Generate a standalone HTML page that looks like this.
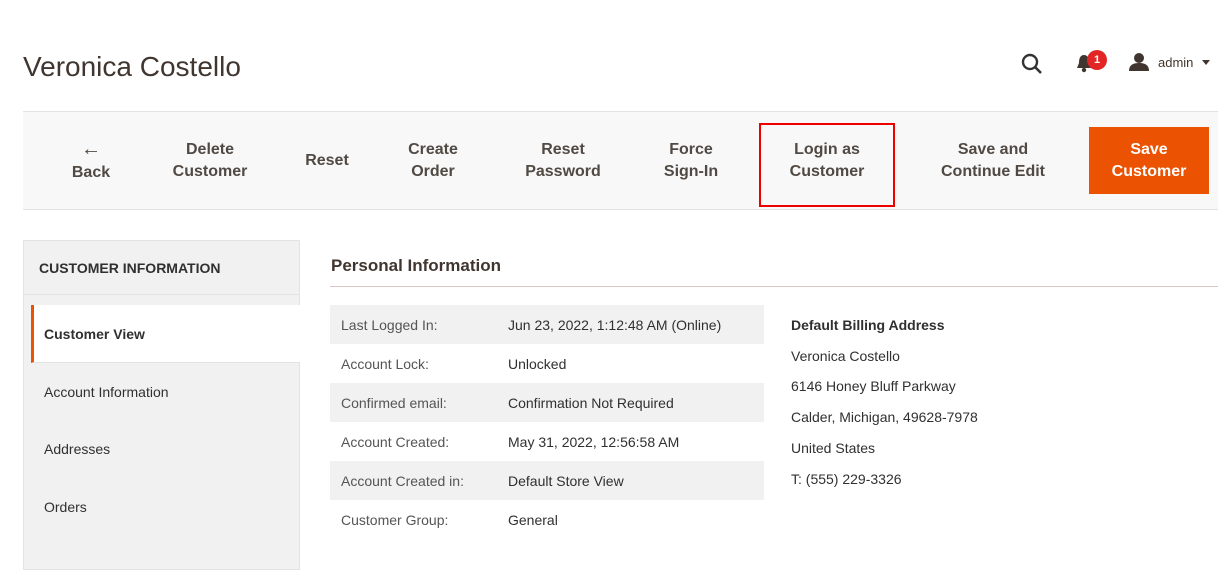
<!DOCTYPE html>
<html><head><style>
*{margin:0;padding:0;box-sizing:border-box}
body{width:1218px;height:560px;overflow:hidden;background:#fff;font-family:"Liberation Sans",sans-serif;color:#333;position:relative}
.a{position:absolute}
h1{position:absolute;left:23px;top:51px;font-size:28px;font-weight:normal;color:#41362f}
.tb{left:23px;top:111px;width:1195px;height:99px;background:#f8f8f8;border-top:1px solid #e3e3e3;border-bottom:1px solid #e3e3e3}
.btn{position:absolute;top:0;height:97px;display:flex;align-items:center;justify-content:center;text-align:center;font-size:16px;font-weight:bold;color:#514943;line-height:22px}
.side{left:23px;top:240px;width:277px;height:330px;background:#f1f1f1;border:1px solid #e3e3e3}
.it{position:absolute;left:44px;font-size:14px;color:#303030}
.row{position:absolute;left:330px;width:434px;height:39px;font-size:14px;color:#303030}
.row span{position:absolute;top:12px}
.row .l{left:11px;color:#555}
.row .v{left:178px}
.g{background:#f1f1f1}
.ad{position:absolute;left:791px;font-size:14px;color:#303030}
</style></head><body>
<h1>Veronica Costello</h1>
<svg class="a" style="left:1020px;top:52px" width="24" height="24" viewBox="0 0 24 24"><circle cx="10" cy="10" r="7" fill="none" stroke="#333" stroke-width="2.4"/><line x1="15" y1="15" x2="21" y2="21" stroke="#333" stroke-width="2.6"/></svg>
<svg class="a" style="left:1075px;top:54px" width="18" height="20" viewBox="0 0 18 20"><path d="M9 1C5 1 4 5 4 9L2 14H16L14 9C14 5 13 1 9 1Z" fill="#41362f"/><circle cx="9" cy="16" r="2.2" fill="#41362f"/></svg>
<div class="a" style="left:1087px;top:50px;width:20px;height:20px;border-radius:50%;background:#e22626;color:#fff;font-size:11px;font-weight:bold;text-align:center;line-height:20px">1</div>
<svg class="a" style="left:1129px;top:52px" width="20" height="20" viewBox="0 0 20 20"><circle cx="10" cy="6" r="5" fill="#41362f"/><path d="M0 19C0 13 4 11 10 11S20 13 20 19Z" fill="#41362f"/></svg>
<div class="a" style="left:1158px;top:55px;font-size:13px;color:#41362f">admin</div>
<div class="a" style="left:1202px;top:60px;border-left:4px solid transparent;border-right:4px solid transparent;border-top:5px solid #41362f"></div>
<div class="a tb">
<div class="btn" style="left:38px;width:60px"><span><span style="font-size:20px">←</span><br>Back</span></div>
<div class="btn" style="left:137px;width:100px">Delete<br>Customer</div>
<div class="btn" style="left:274px;width:60px">Reset</div>
<div class="btn" style="left:370px;width:80px">Create<br>Order</div>
<div class="btn" style="left:488px;width:104px">Reset<br>Password</div>
<div class="btn" style="left:628px;width:80px">Force<br>Sign-In</div>
<div class="a" style="left:736px;top:11px;height:84px;width:136px;border:2px solid #e00"></div>
<div class="btn" style="left:736px;width:136px">Login as<br>Customer</div>
<div class="btn" style="left:905px;width:130px">Save and<br>Continue Edit</div>
<div class="btn" style="left:1066px;top:15px;height:67px;width:120px;background:#eb5202;color:#fff">Save<br>Customer</div>
</div>
<div class="a side"></div>
<div class="a" style="left:23px;top:240px;width:277px;height:55px;border-bottom:1px solid #e3e3e3"></div>
<div class="a" style="left:39px;top:260px;font-size:14px;font-weight:bold;color:#303030">CUSTOMER INFORMATION</div>
<div class="a" style="left:31px;top:305px;width:269px;height:58px;background:#fff;border-left:3px solid #eb5202;border-bottom:1px solid #e3e3e3"></div>
<div class="it" style="top:326px;font-weight:bold">Customer View</div>
<div class="it" style="top:384px">Account Information</div>
<div class="it" style="top:441px">Addresses</div>
<div class="it" style="top:499px">Orders</div>
<div class="a" style="left:331px;top:256px;font-size:17px;font-weight:bold;color:#41362f">Personal Information</div>
<div class="a" style="left:330px;top:286px;width:888px;height:1px;background:#d8c8c0"></div>
<div class="row g" style="top:305px"><span class="l">Last Logged In:</span><span class="v">Jun 23, 2022, 1:12:48 AM (Online)</span></div>
<div class="row" style="top:344px"><span class="l">Account Lock:</span><span class="v">Unlocked</span></div>
<div class="row g" style="top:383px"><span class="l">Confirmed email:</span><span class="v">Confirmation Not Required</span></div>
<div class="row" style="top:422px"><span class="l">Account Created:</span><span class="v">May 31, 2022, 12:56:58 AM</span></div>
<div class="row g" style="top:461px"><span class="l">Account Created in:</span><span class="v">Default Store View</span></div>
<div class="row" style="top:500px"><span class="l">Customer Group:</span><span class="v">General</span></div>
<div class="ad" style="top:317px;font-weight:bold">Default Billing Address</div>
<div class="ad" style="top:348px">Veronica Costello</div>
<div class="ad" style="top:378px">6146 Honey Bluff Parkway</div>
<div class="ad" style="top:409px">Calder, Michigan, 49628-7978</div>
<div class="ad" style="top:440px">United States</div>
<div class="ad" style="top:471px">T: (555) 229-3326</div>
</body></html>
